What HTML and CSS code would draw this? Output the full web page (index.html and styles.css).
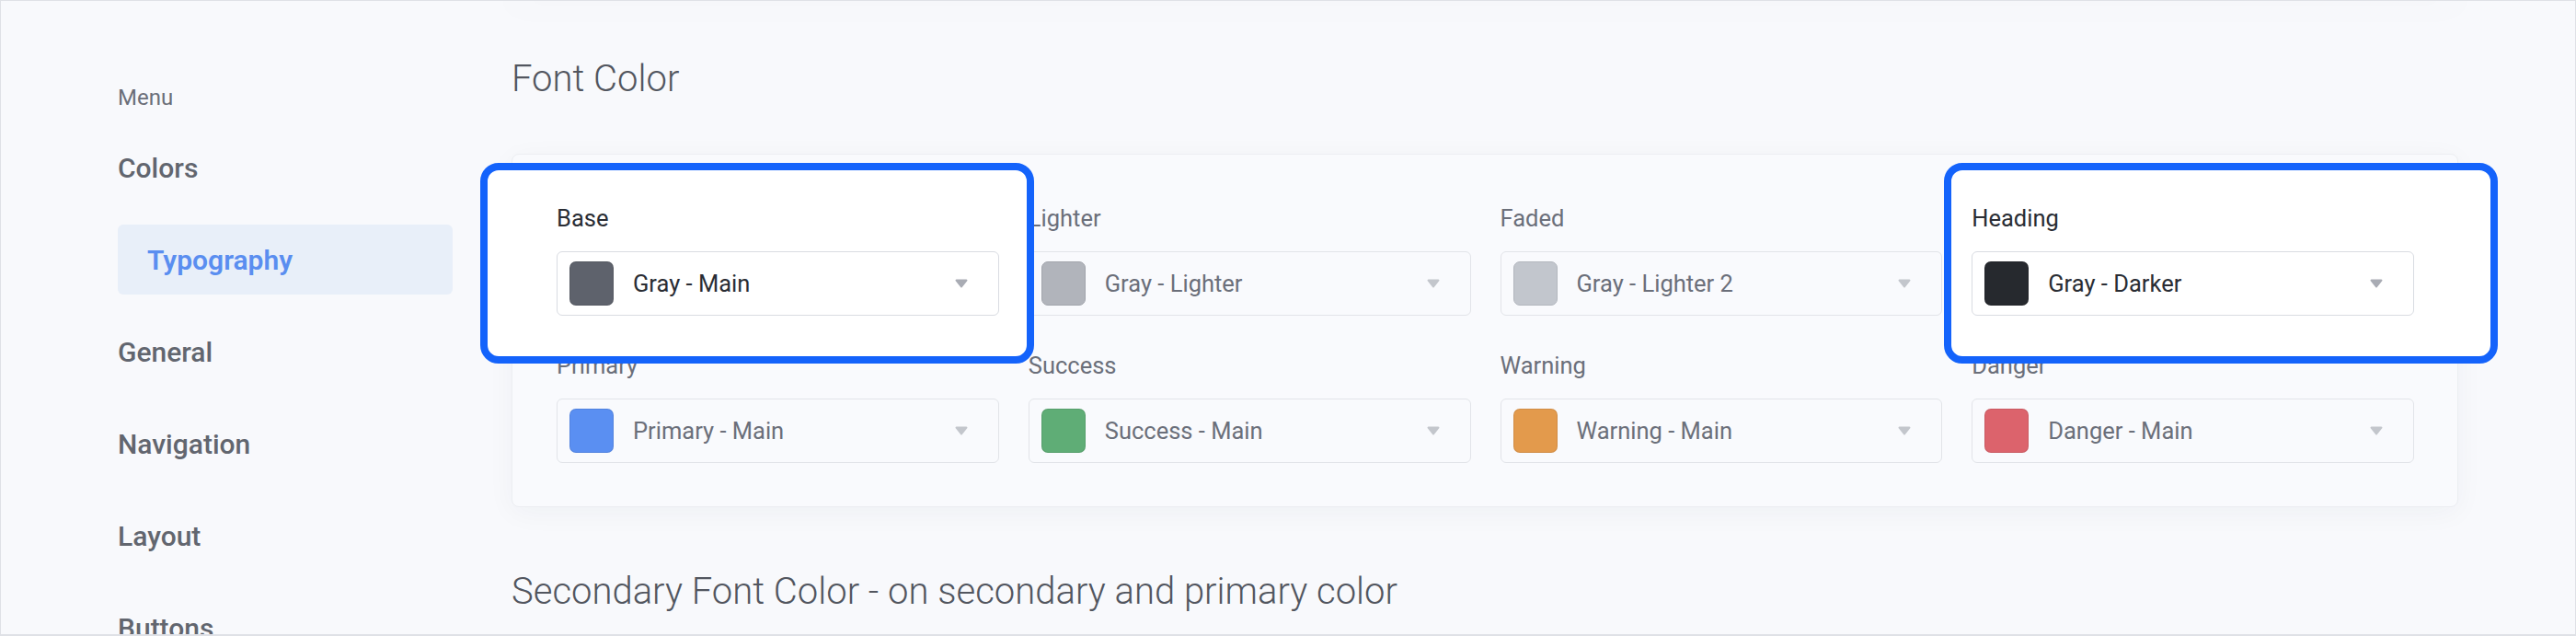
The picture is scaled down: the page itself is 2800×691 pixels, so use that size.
FILE: index.html
```html
<!DOCTYPE html>
<html lang="en">
<head>
<meta charset="utf-8">
<title>Typography settings</title>
<link rel="stylesheet" href="styles.css">
</head>
<body>
<div class="frame">
  <aside class="sidebar">
    <div class="menu-title">Menu</div>
    <nav class="nav">
      <div class="nav-item">Colors</div>
      <div class="nav-item active">Typography</div>
      <div class="nav-item">General</div>
      <div class="nav-item">Navigation</div>
      <div class="nav-item">Layout</div>
      <div class="nav-item">Buttons</div>
    </nav>
  </aside>
  <main class="main">
    <div class="prev-card"></div>
    <h2 class="section-title">Font Color</h2>
    <section class="card">
      <div class="field hl hl-left">
        <div class="label">Base</div>
        <div class="select">
          <span class="swatch sw-gray"></span>
          <span class="value">Gray - Main</span>
          <svg class="arrow" width="14" height="10" viewBox="0 0 14 10"><path d="M1.6 0.5h10.8a1.1 1.1 0 0 1 .85 1.8L7.85 8.9a1.1 1.1 0 0 1-1.7 0L.75 2.3A1.1 1.1 0 0 1 1.6.5z"/></svg>
        </div>
      </div>
      <div class="field">
        <div class="label">Lighter</div>
        <div class="select">
          <span class="swatch sw-lighter"></span>
          <span class="value">Gray - Lighter</span>
          <svg class="arrow" width="14" height="10" viewBox="0 0 14 10"><path d="M1.6 0.5h10.8a1.1 1.1 0 0 1 .85 1.8L7.85 8.9a1.1 1.1 0 0 1-1.7 0L.75 2.3A1.1 1.1 0 0 1 1.6.5z"/></svg>
        </div>
      </div>
      <div class="field">
        <div class="label">Faded</div>
        <div class="select">
          <span class="swatch sw-lighter2"></span>
          <span class="value">Gray - Lighter 2</span>
          <svg class="arrow" width="14" height="10" viewBox="0 0 14 10"><path d="M1.6 0.5h10.8a1.1 1.1 0 0 1 .85 1.8L7.85 8.9a1.1 1.1 0 0 1-1.7 0L.75 2.3A1.1 1.1 0 0 1 1.6.5z"/></svg>
        </div>
      </div>
      <div class="field hl hl-right">
        <div class="label">Heading</div>
        <div class="select">
          <span class="swatch sw-darker"></span>
          <span class="value">Gray - Darker</span>
          <svg class="arrow" width="14" height="10" viewBox="0 0 14 10"><path d="M1.6 0.5h10.8a1.1 1.1 0 0 1 .85 1.8L7.85 8.9a1.1 1.1 0 0 1-1.7 0L.75 2.3A1.1 1.1 0 0 1 1.6.5z"/></svg>
        </div>
      </div>
      <div class="field">
        <div class="label">Primary</div>
        <div class="select">
          <span class="swatch sw-primary"></span>
          <span class="value">Primary - Main</span>
          <svg class="arrow" width="14" height="10" viewBox="0 0 14 10"><path d="M1.6 0.5h10.8a1.1 1.1 0 0 1 .85 1.8L7.85 8.9a1.1 1.1 0 0 1-1.7 0L.75 2.3A1.1 1.1 0 0 1 1.6.5z"/></svg>
        </div>
      </div>
      <div class="field">
        <div class="label">Success</div>
        <div class="select">
          <span class="swatch sw-success"></span>
          <span class="value">Success - Main</span>
          <svg class="arrow" width="14" height="10" viewBox="0 0 14 10"><path d="M1.6 0.5h10.8a1.1 1.1 0 0 1 .85 1.8L7.85 8.9a1.1 1.1 0 0 1-1.7 0L.75 2.3A1.1 1.1 0 0 1 1.6.5z"/></svg>
        </div>
      </div>
      <div class="field">
        <div class="label">Warning</div>
        <div class="select">
          <span class="swatch sw-warning"></span>
          <span class="value">Warning - Main</span>
          <svg class="arrow" width="14" height="10" viewBox="0 0 14 10"><path d="M1.6 0.5h10.8a1.1 1.1 0 0 1 .85 1.8L7.85 8.9a1.1 1.1 0 0 1-1.7 0L.75 2.3A1.1 1.1 0 0 1 1.6.5z"/></svg>
        </div>
      </div>
      <div class="field">
        <div class="label">Danger</div>
        <div class="select">
          <span class="swatch sw-danger"></span>
          <span class="value">Danger - Main</span>
          <svg class="arrow" width="14" height="10" viewBox="0 0 14 10"><path d="M1.6 0.5h10.8a1.1 1.1 0 0 1 .85 1.8L7.85 8.9a1.1 1.1 0 0 1-1.7 0L.75 2.3A1.1 1.1 0 0 1 1.6.5z"/></svg>
        </div>
      </div>
    </section>
    <h2 class="section-title second">Secondary Font Color - on secondary and primary color</h2>
  </main>
</div>
</body>
</html>
```

FILE: styles.css
```css
*, *::before, *::after { box-sizing: border-box; }

html, body {
  margin: 0;
  padding: 0;
  background: #f8f9fc;
}

body {
  font-family: Roboto, "Liberation Sans", Arial, sans-serif;
}

.frame {
  width: 2800px;
  height: 691px;
  border: 1px solid #dfe1e6;
  border-bottom-width: 2px;
  background: #f8f9fc;
  display: flex;
  overflow: hidden;
}

/* Sidebar */
.sidebar {
  flex: 0 0 491px;
  padding: 89px 0 0 127px;
}

.menu-title {
  font-size: 24px;
  line-height: 32px;
  color: #6b6f79;
  margin-bottom: 22px;
}

.nav {
  display: flex;
  flex-direction: column;
  gap: 24px;
}

.nav-item {
  width: 364px;
  height: 76px;
  display: flex;
  align-items: center;
  font-size: 30px;
  font-weight: 500;
  color: #62666f;
  flex-shrink: 0;
}

.nav-item.active {
  background: #e8eff9;
  border-radius: 6px;
  padding-left: 32px;
  color: #5a8ef0;
  font-weight: 600;
}

/* Main */
.main {
  flex: 1;
  padding: 0 127px 0 64px;
  min-width: 0;
}

.prev-card {
  height: 0;
  box-shadow: 0 0 36px 8px rgba(40, 50, 80, 0.025);
}

.section-title {
  margin: 61px 0 0;
  font-size: 40px;
  line-height: 48px;
  font-weight: 300;
  color: #52565f;
  white-space: nowrap;
}

.section-title.second {
  margin-top: 68px;
}

.card {
  margin-top: 57px;
  background: #f9fafd;
  border: 1px solid #eceef2;
  border-radius: 8px;
  box-shadow: 0 6px 30px rgba(30, 40, 70, 0.045);
  padding: 53px 47px 47px 48px;
  display: grid;
  grid-template-columns: repeat(4, 1fr);
  column-gap: 32px;
  row-gap: 38px;
}

.field {
  min-width: 0;
}

.label {
  font-size: 25.5px;
  line-height: 32px;
  color: #6b6f7a;
  margin-bottom: 20px;
  white-space: nowrap;
}

.select {
  height: 70px;
  border: 1px solid #e2e4e9;
  border-radius: 6px;
  display: flex;
  align-items: center;
  padding: 0 33px 0 13px;
  background: #f9fafd;
}

.swatch {
  flex: 0 0 48px;
  width: 48px;
  height: 48px;
  border-radius: 7px;
  border: 1px solid rgba(0, 0, 0, 0.08);
  margin-right: 21px;
}

.value {
  flex: 1;
  font-size: 25.5px;
  line-height: 32px;
  color: #6b6f7a;
  white-space: nowrap;
}

.arrow {
  flex: 0 0 14px;
  fill: #c3c6cc;
}

.sw-gray { background: #5e626c; }
.sw-lighter { background: #b1b4bb; border-color: #a2a5ac; }
.sw-lighter2 { background: #c2c6cd; border-color: #b3b7be; }
.sw-darker { background: #26292e; }
.sw-primary { background: #5a8ff2; }
.sw-success { background: #5fad76; }
.sw-warning { background: #e39a4c; }
.sw-danger { background: #dc636c; }

/* Highlight overlay on selected fields */
.hl {
  position: relative;
}

.hl::before {
  content: "";
  position: absolute;
  top: -44px;
  width: 602px;
  height: 218px;
  background: #ffffff;
  border: 8px solid #1463fb;
  border-radius: 20px;
  z-index: 1;
}

.hl-left::before { left: -83px; }
.hl-right::before { left: -30px; }

.hl > * {
  position: relative;
  z-index: 2;
}

.hl .label,
.hl .value {
  color: #2a2d34;
}

.hl .select {
  background: #ffffff;
  border-color: #d9dce2;
}

.hl .arrow {
  fill: #a9acb4;
}
```
